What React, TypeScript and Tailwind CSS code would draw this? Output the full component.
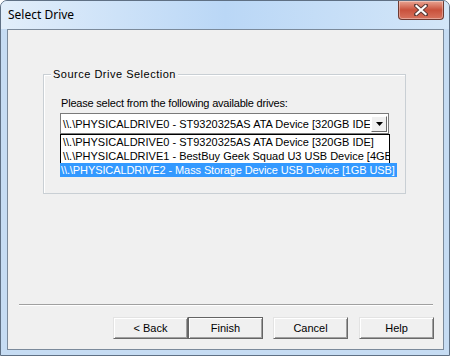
const drives = [
  "\\\\.\\PHYSICALDRIVE0 - ST9320325AS ATA Device [320GB IDE]",
  "\\\\.\\PHYSICALDRIVE1 - BestBuy Geek Squad U3 USB Device [4GB USB]",
  "\\\\.\\PHYSICALDRIVE2 - Mass Storage Device USB Device [1GB USB]",
];

const btn =
  "h-[22px] w-[75px] bg-[#f0f0f0] text-[11px] text-black flex items-center justify-center";
const raised =
  "border border-t-[#e3e3e3] border-l-[#e3e3e3] border-b-[#696969] border-r-[#696969] shadow-[inset_1px_1px_0_#ffffff,inset_-1px_-1px_0_#a0a0a0]";

function CloseButton() {
  return (
    <div className="h-[19px] w-[46px] rounded-b-[4px] border border-t-0 border-[#6e3a32] bg-gradient-to-b from-[#e8a493] via-[#c9513c] to-[#d7735e] flex items-center justify-center shadow-[inset_0_0_0_1px_rgba(255,255,255,0.35)]">
      <svg width="14" height="12" viewBox="0 0 14 12">
        <path d="M2 1.5 L12 10.5 M12 1.5 L2 10.5" stroke="#5a3a36" strokeWidth="4" strokeLinecap="square" />
        <path d="M2.5 2 L11.5 10 M11.5 2 L2.5 10" stroke="#ffffff" strokeWidth="2.2" strokeLinecap="square" />
      </svg>
    </div>
  );
}

export default function App() {
  return (
    <div
      className="w-[450px] h-[356px] overflow-hidden rounded-t-[7px] border border-[#5f7084] bg-[#c6dcf3] flex flex-col"
      style={{ fontFamily: '"Liberation Sans", Arial, sans-serif' }}
    >
      {/* title bar */}
      <div className="h-[28px] shrink-0 flex items-start justify-between bg-gradient-to-r from-[#e2eefa] via-[#bad7f6] to-[#d3e6f8] pl-[7px] pr-[5px]">
        <span
          className="mt-[5px] text-[12px] leading-[18px] text-black"
          style={{ fontFamily: '"Noto Sans", "Open Sans", sans-serif' }}
        >
          Select Drive
        </span>
        <CloseButton />
      </div>

      {/* client area */}
      <div className="ml-[6px] w-[437px] h-[321px] shrink-0 border border-[#7b8a9b] bg-[#f0f0f0] flex flex-col">
        <div className="relative ml-[35px] mt-[44px] w-[363px] h-[120px] border border-[#c9cfd4] shadow-[inset_1px_1px_0_#ffffff]">
          <span className="absolute left-[7px] top-[-8px] bg-[#f0f0f0] px-[2px] text-[11px] leading-[14px] tracking-[0.5px] text-black">
            Source Drive Selection
          </span>

          <div className="pl-[17px] pt-[21px] text-[11px] leading-[14px] tracking-[-0.2px] text-black">
            Please select from the following available drives:
          </div>

          <div className="relative ml-[16px] mt-[3px] w-[329px] h-[21px] bg-white border border-[#7a7a7a] flex items-center">
            <span className="pl-[2px] w-[309px] overflow-hidden whitespace-nowrap text-[11px] leading-[14px] text-black">
              {drives[0]}
            </span>
            <div className="ml-auto mr-[1px] w-[16px] h-[16px] bg-[#f0f0f0] border border-t-[#ffffff] border-l-[#ffffff] border-b-[#696969] border-r-[#696969] flex items-center justify-center">
              <svg width="7" height="4" viewBox="0 0 7 4">
                <path d="M0 0 H7 L3.5 4 Z" fill="#000" />
              </svg>
            </div>

            {/* dropdown list */}
            <div className="absolute left-[-1px] top-[20px] w-[330px] z-10">
              <div className="border border-b-0 border-black bg-white">
                {drives.slice(0, 2).map((d) => (
                  <div
                    key={d}
                    className="h-[14px] pl-[2px] overflow-hidden whitespace-nowrap text-[11px] leading-[14px] text-black"
                  >
                    {d}
                  </div>
                ))}
              </div>
              <div className="flex">
                <div className="w-[1px] h-[14px] bg-black" />
                <div className="h-[14px] shrink-0 bg-[#3399ff] pl-[1px] pr-[2px] whitespace-nowrap text-[11px] leading-[14px] tracking-[-0.1px] text-white">
                  {drives[2]}
                </div>
              </div>
            </div>
          </div>
        </div>

        {/* separator */}
        <div className="ml-[11px] mt-[110px] w-[414px] h-[2px] border-t border-t-[#a0a0a0] border-b border-b-[#ffffff]" />

        {/* buttons */}
        <div className="mt-[11px] flex justify-end pr-[9px]">
          <button className={`${btn} ${raised}`}>&lt; Back</button>
          <button className={`${btn} border border-[#646464] shadow-[inset_1px_1px_0_#ffffff,inset_-1px_-1px_0_#a0a0a0,inset_0_0_0_1px_#8a8a8a]`}>
            Finish
          </button>
          <button className={`${btn} ${raised} ml-[10px]`}>Cancel</button>
          <button className={`${btn} ${raised} ml-[11px]`}>Help</button>
        </div>
      </div>
    </div>
  );
}
